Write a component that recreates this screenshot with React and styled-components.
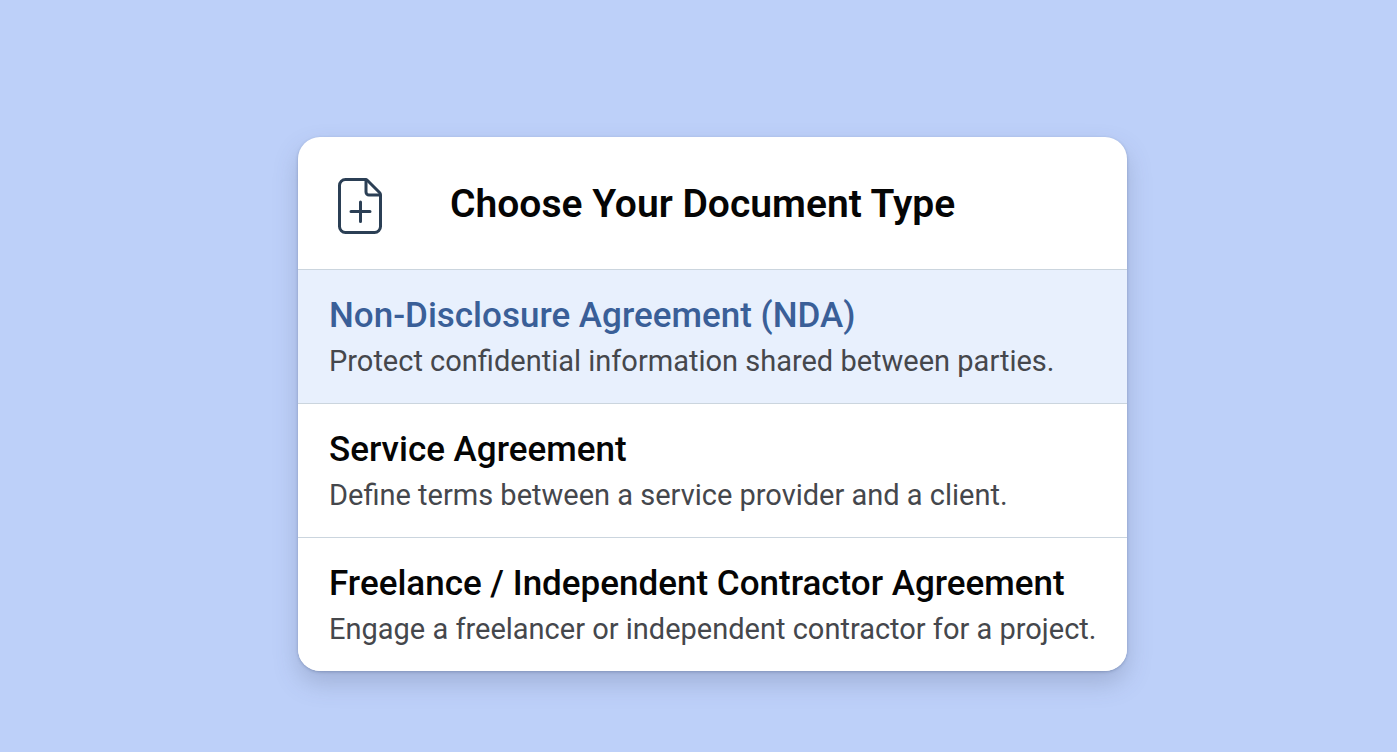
import { useState } from "react";
import styled, { createGlobalStyle } from "styled-components";

const GlobalStyle = createGlobalStyle`
  * {
    box-sizing: border-box;
  }

  body {
    margin: 0;
    background: #bdd0f9;
    font-family: Roboto, Inter, "Liberation Sans", sans-serif;
  }
`;

const SPage = styled.main`
  min-height: 100vh;
  display: flex;
  align-items: center;
  justify-content: center;
  padding: 56px 0 0 28px;
`;

const SCard = styled.section`
  width: 100%;
  max-width: 829px;
  background: #ffffff;
  border-radius: 22px;
  overflow: hidden;
  box-shadow:
    0 1px 3px rgba(60, 80, 120, 0.35),
    0 12px 24px rgba(80, 90, 120, 0.26);
`;

const SHeader = styled.header`
  display: flex;
  align-items: center;
  gap: 66px;
  padding: 40px 38px 34px;

  svg {
    flex-shrink: 0;
  }
`;

const STitle = styled.h1`
  margin: 0 0 4px;
  font-size: 39px;
  font-weight: 600;
  line-height: 48px;
  color: #050505;
`;

const SList = styled.ul`
  list-style: none;
  margin: 0;
  padding: 0;
`;

const SOption = styled.button`
  display: block;
  width: 100%;
  padding: 25px 28px 22px 31px;
  border: none;
  border-top: 1px solid #cbd5de;
  background: ${({ $active }) => ($active ? "#e8f0fd" : "#ffffff")};
  font-family: inherit;
  text-align: left;
  cursor: pointer;
`;

const SOptionTitle = styled.span`
  display: block;
  font-size: 35px;
  font-weight: 500;
  line-height: 42px;
  color: ${({ $active }) => ($active ? "#3a5f98" : "#050505")};
`;

const SOptionText = styled.span`
  display: block;
  padding-top: 4px;
  font-size: 29px;
  font-weight: 400;
  line-height: 40px;
  color: #45474c;
`;

const documentTypes = [
  {
    id: "nda",
    title: "Non-Disclosure Agreement (NDA)",
    text: "Protect confidential information shared between parties.",
  },
  {
    id: "service",
    title: "Service Agreement",
    text: "Define terms between a service provider and a client.",
  },
  {
    id: "freelance",
    title: "Freelance / Independent Contractor Agreement",
    text: "Engage a freelancer or independent contractor for a project.",
  },
];

function DocumentIcon() {
  return (
    <svg
      width="48"
      height="58"
      viewBox="0 0 48 58"
      fill="none"
      stroke="#2b3f55"
      strokeWidth="3"
      strokeLinecap="round"
      strokeLinejoin="round"
      aria-hidden="true"
    >
      <path d="M29.500 2.500H9.500a6 6 0 0 0-6 6V49.500a6 6 0 0 0 6 6h29a6 6 0 0 0 6-6V18q0-1.500-1-2.500L31.500 3.500q-1-1-2-1" />
      <path d="M30 3V15a3 3 0 0 0 3 3H44" />
      <path d="M24.500 25v19.500M15 34.500h19" />
    </svg>
  );
}

export default function App() {
  const [selected, setSelected] = useState("nda");

  return (
    <>
      <GlobalStyle />
      <SPage>
        <SCard>
          <SHeader>
            <DocumentIcon />
            <STitle>Choose Your Document Type</STitle>
          </SHeader>
          <SList>
            {documentTypes.map(({ id, title, text }) => (
              <li key={id}>
                <SOption
                  type="button"
                  $active={selected === id}
                  aria-pressed={selected === id}
                  onClick={() => setSelected(id)}
                >
                  <SOptionTitle $active={selected === id}>{title}</SOptionTitle>
                  <SOptionText>{text}</SOptionText>
                </SOption>
              </li>
            ))}
          </SList>
        </SCard>
      </SPage>
    </>
  );
}
